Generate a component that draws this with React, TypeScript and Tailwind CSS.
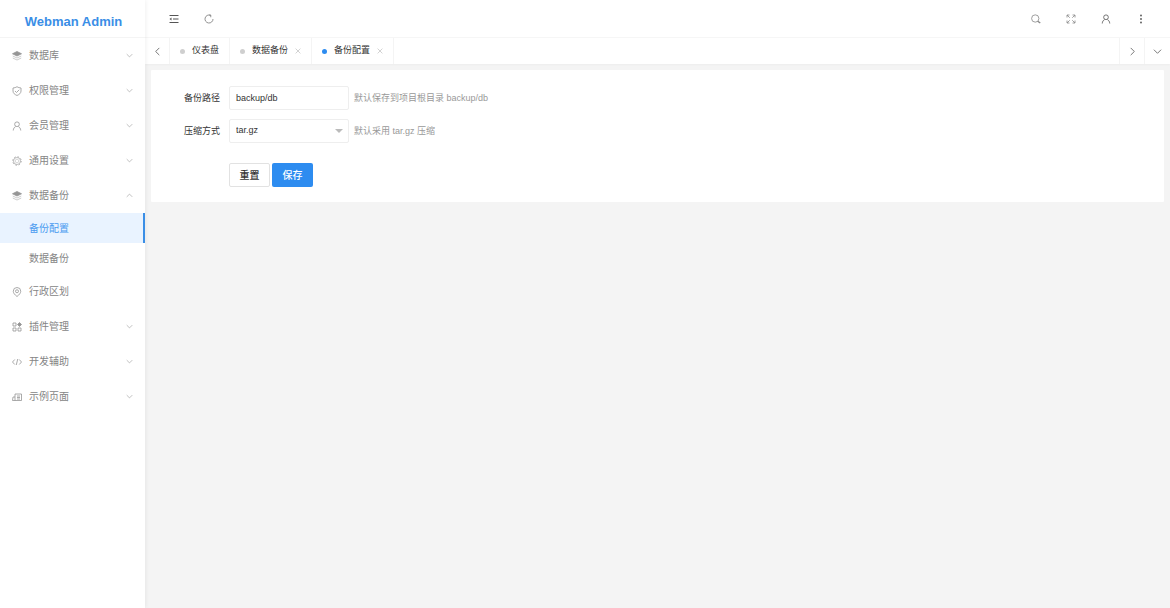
import type { ReactNode } from "react";
import { clsx } from "clsx";

type IconProps = { children: ReactNode; className?: string };

function Icon({ children, className }: IconProps) {
  return (
    <svg
      viewBox="0 0 20 20"
      fill="none"
      stroke="currentColor"
      strokeWidth="1.6"
      className={clsx("shrink-0", className)}
      aria-hidden="true"
    >
      {children}
    </svg>
  );
}

const icons = {
  layers: (
    <>
      <path d="M10 1 19 5.500l-9 4.500-9-4.500z" fill="currentColor" />
      <path d="m1.500 10 8.500 4 8.500-4M1.500 14l8.500 4 8.500-4" strokeOpacity="0.6" />
    </>
  ),
  shield: (
    <>
      <path d="M10 1.500c2.500 1.600 5 2.300 8 2.500v6c0 4.500-3.500 7-8 9-4.500-2-8-4.500-8-9V4c3-.2 5.500-.9 8-2.500z" />
      <path d="m6 10 3 3 5.500-5.500" />
    </>
  ),
  user: (
    <>
      <circle cx="10" cy="6.500" r="4.700" />
      <path d="M2.500 19c.3-4 2-6.500 4.700-7.800M17.500 19c-.3-4-2-6.500-4.700-7.800" />
    </>
  ),
  gear: (
    <>
      <circle cx="10" cy="10" r="7" strokeWidth="1.200" />
      <circle cx="10" cy="10" r="8.500" strokeDasharray="3 3.680" />
      <circle cx="10" cy="10" r="3.500" strokeWidth="1.200" strokeOpacity="0.6" />
    </>
  ),
  pin: (
    <>
      <path d="M10 19c-4.500-3.500-7.500-7-7.500-10.500a7.500 7.500 0 0 1 15 0C17.500 12 14.500 15.500 10 19z" />
      <circle cx="10" cy="8.500" r="3" />
    </>
  ),
  plugin: (
    <>
      <path d="M2 2h6v6H2zM2 12h6v6H2zM12 12h6v6h-6z" />
      <path d="m15 1 4 4-4 4-4-4z" fill="currentColor" />
    </>
  ),
  code: <path d="M5.500 5 1 10l4.500 5M14.500 5l4.500 5-4.500 5M11.500 4l-3 12" />,
  page: (
    <>
      <path d="M6 4h13v13H1l1-7h4z" />
      <path d="M6 10v7M10 8h6M10 11h6M10 14h6" />
    </>
  ),
  down: <path d="m2 6 8 8 8-8" />,
  up: <path d="m2 14 8-8 8 8" />,
  left: <path d="m14 2-8 8 8 8" />,
  right: <path d="m6 2 8 8-8 8" />,
  close: <path d="m2 2 16 16M18 2 2 18" />,
  collapse: (
    <>
      <path d="M1 3h18M8 10h11M1 17h18" strokeWidth="2" />
      <path d="M5 7v6l-4-3z" fill="currentColor" stroke="none" />
    </>
  ),
  refresh: <path d="M18 10a8 8 0 1 1-5-7.400M13.500 6.500V2h-3" />,
  search: (
    <>
      <circle cx="8.500" cy="9" r="7.300" />
      <path d="M13.500 14.500 18.500 18" strokeWidth="3" />
    </>
  ),
  expand: (
    <path d="M2 7V2h5M2 2l5.500 5.500M13 2h5v5M18 2l-5.500 5.500M2 13v5h5M2 18l5.500-5.500M18 13v5h-5M18 18l-5.500-5.500" />
  ),
  more: (
    <g fill="currentColor" stroke="none">
      <circle cx="10" cy="3" r="1.800" />
      <circle cx="10" cy="10" r="1.800" />
      <circle cx="10" cy="17" r="1.800" />
    </g>
  ),
};

type IconName = keyof typeof icons;

type MenuItem = {
  title: string;
  icon: IconName;
  leaf?: boolean;
  children?: string[];
};

const menu: MenuItem[] = [
  { title: "数据库", icon: "layers" },
  { title: "权限管理", icon: "shield" },
  { title: "会员管理", icon: "user" },
  { title: "通用设置", icon: "gear" },
  { title: "数据备份", icon: "layers", children: ["备份配置", "数据备份"] },
  { title: "行政区划", icon: "pin", leaf: true },
  { title: "插件管理", icon: "plugin" },
  { title: "开发辅助", icon: "code" },
  { title: "示例页面", icon: "page" },
];

const tabs = [
  { title: "仪表盘", closable: false },
  { title: "数据备份", closable: true },
  { title: "备份配置", closable: true },
];

const current = "备份配置";

function Sidebar() {
  return (
    <aside className="z-10 w-[145px] shrink-0 bg-white shadow-[1px_0_4px_rgba(0,0,0,0.06)]">
      <div className="flex h-[38px] items-center justify-center border-b border-[#f4f4f4] pt-[6px] pl-[2px] text-[13px] font-bold text-[#3a8ee6]">
        Webman Admin
      </div>
      <nav className="text-[10px] text-[#858585]">
        <ul>
          {menu.map((item) => (
            <li key={item.title}>
              <a href="#" className="flex h-[35px] items-center px-3">
                <Icon className="size-[10px] text-[#959595]">{icons[item.icon]}</Icon>
                <span className="ml-[7px] flex-1">{item.title}</span>
                {!item.leaf && (
                  <Icon className="size-[7px] text-[#8f8f8f]">
                    {item.children ? icons.up : icons.down}
                  </Icon>
                )}
              </a>
              {item.children && (
                <ul className="pb-px">
                  {item.children.map((child) => (
                    <li key={child}>
                      <a
                        href="#"
                        className={clsx(
                          "flex h-[30px] items-center pl-[29px]",
                          child === current &&
                            "border-r-2 border-[#3a8ee6] bg-[#e9f3ff] text-[#4a9bf0]"
                        )}
                      >
                        {child}
                      </a>
                    </li>
                  ))}
                </ul>
              )}
            </li>
          ))}
        </ul>
      </nav>
    </aside>
  );
}

function HeaderButton({ label, icon, className }: { label: string; icon: IconName; className?: string }) {
  return (
    <button type="button" aria-label={label} className="flex h-full w-[35px] items-center justify-center">
      <Icon className={clsx("size-[10px]", className)}>{icons[icon]}</Icon>
    </button>
  );
}

function Header() {
  return (
    <header className="flex h-[38px] items-center justify-between border-b border-[#f6f6f6] pr-3 pl-[11px] text-[#555]">
      <div className="flex h-full">
        <HeaderButton label="折叠菜单" icon="collapse" />
        <HeaderButton label="刷新" icon="refresh" className="text-[#777]" />
      </div>
      <div className="flex h-full">
        <HeaderButton label="搜索" icon="search" className="text-[#888]" />
        <HeaderButton label="全屏" icon="expand" className="text-[#888]" />
        <HeaderButton label="用户" icon="user" />
        <HeaderButton label="更多" icon="more" />
      </div>
    </header>
  );
}

function TabBar() {
  return (
    <div className="flex h-[26px] text-[9px] text-[#333]">
      <button
        type="button"
        aria-label="向左"
        className="flex w-[25px] items-center justify-center border-r border-[#f4f4f4]"
      >
        <Icon className="size-[9px] text-[#444]">{icons.left}</Icon>
      </button>
      <ul className="flex flex-1">
        {tabs.map((tab) => (
          <li
            key={tab.title}
            className="flex items-center gap-[7px] border-r border-[#f4f4f4] px-[10px]"
          >
            <span
              className={clsx(
                "size-[5px] rounded-full",
                tab.title === current ? "bg-[#2d8cf0]" : "bg-[#cfcfcf]"
              )}
            />
            <a href="#">{tab.title}</a>
            {tab.closable && (
              <button type="button" aria-label="关闭">
                <Icon className="size-[6px] text-[#a0a0a0]">{icons.close}</Icon>
              </button>
            )}
          </li>
        ))}
      </ul>
      <button
        type="button"
        aria-label="向右"
        className="flex w-[25px] items-center justify-center border-l border-[#f4f4f4]"
      >
        <Icon className="size-[9px] text-[#444]">{icons.right}</Icon>
      </button>
      <button
        type="button"
        aria-label="标签操作"
        className="flex w-[26px] items-center justify-center border-l border-[#f4f4f4]"
      >
        <Icon className="size-[9px] text-[#444]">{icons.down}</Icon>
      </button>
    </div>
  );
}

function BackupForm() {
  return (
    <form className="rounded-[1px] bg-white px-[33px] pt-4 pb-[15px] text-[9px] text-[#333]">
      <div className="flex items-center">
        <label htmlFor="path" className="w-[45px] shrink-0 pt-[2px]">
          备份路径
        </label>
        <input
          id="path"
          type="text"
          defaultValue="backup/db"
          className="h-6 w-[120px] rounded-[2px] border border-[#eee] px-[6px] outline-none"
        />
        <span className="ml-[5px] pt-[2px] text-[#999]">默认保存到项目根目录 backup/db</span>
      </div>
      <div className="mt-[9px] flex items-center">
        <label htmlFor="method" className="w-[45px] shrink-0 pt-[2px]">
          压缩方式
        </label>
        <div className="relative">
          <select
            id="method"
            className="block h-6 w-[120px] appearance-none rounded-[2px] border border-[#eee] bg-white px-[6px] outline-none"
          >
            <option>tar.gz</option>
            <option>zip</option>
          </select>
          <svg
            viewBox="0 0 8 4"
            className="pointer-events-none absolute top-[10px] right-[6px] h-1 w-2 text-[#bbb]"
            aria-hidden="true"
          >
            <path d="M0 0h8L4 4z" fill="currentColor" />
          </svg>
        </div>
        <span className="ml-[5px] pt-[2px] text-[#999]">默认采用 tar.gz 压缩</span>
      </div>
      <div className="mt-5 flex gap-[2px] pl-[45px] text-[10px] font-medium">
        <button type="reset" className="h-6 w-[41px] rounded-[2px] border border-[#e2e2e2] bg-white">
          重置
        </button>
        <button type="submit" className="h-6 w-[41px] rounded-[2px] bg-[#2d8cf0] text-white">
          保存
        </button>
      </div>
    </form>
  );
}

export default function App() {
  return (
    <div className="flex min-h-screen bg-[#f4f4f4] font-['Liberation_Sans','Noto_Sans_CJK_SC',sans-serif]">
      <Sidebar />
      <div className="min-w-0 flex-1">
        <div className="bg-white shadow-[0_1px_2px_rgba(0,0,0,0.03)]">
          <Header />
          <TabBar />
        </div>
        <main className="p-[6px]">
          <BackupForm />
        </main>
      </div>
    </div>
  );
}
